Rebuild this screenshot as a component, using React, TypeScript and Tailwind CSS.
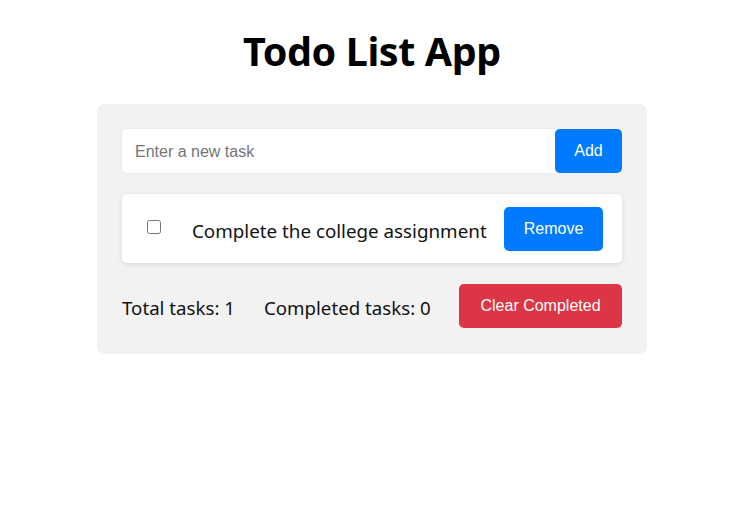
import React from "react";

export default function App() {
  return (
    <div className="min-h-[512px] w-full bg-white flex flex-col items-center pr-[11px]" style={{ fontFamily: "'Noto Sans', 'Open Sans', sans-serif" }}>
      <h1 className="mt-[25px] text-[39.5px] leading-[52px] font-bold text-black tracking-[-0.4px]">Todo List App</h1>
      <div className="mt-[27px] w-[550px] rounded-[8px] bg-[#f2f2f2] px-[25px] pt-[25px] pb-[26px]">
        <div className="flex h-[44px]">
          <input
            className="flex-1 rounded-l-[5px] bg-white px-[13px] pt-[1px] text-[16px] text-[#333] outline-none placeholder:text-[#757575] shadow-[0_0_4px_rgba(0,0,0,0.06)]"
            style={{ fontFamily: "'Liberation Sans', Arial, sans-serif" }}
            placeholder="Enter a new task"
          />
          <button
            className="w-[67px] rounded-[5px] bg-[#007bff] text-[16px] text-white"
            style={{ fontFamily: "'Liberation Sans', Arial, sans-serif" }}
          >
            Add
          </button>
        </div>
        <div className="mt-[21px] flex h-[69px] items-center rounded-[5px] bg-white pl-[25px] pr-[19px] shadow-[0_1px_5px_rgba(0,0,0,0.12)]">
          <input type="checkbox" className="h-[14px] w-[14px] m-0 mt-[-4px]" />
          <span className="ml-[31px] pt-[5px] text-[18.8px] text-[#111]">Complete the college assignment</span>
          <button
            className="ml-auto h-[44px] w-[99px] rounded-[5px] bg-[#007bff] text-[16px] text-white"
            style={{ fontFamily: "'Liberation Sans', Arial, sans-serif" }}
          >
            Remove
          </button>
        </div>
        <div className="mt-[21px] flex h-[44px] items-center">
          <span className="pt-[4px] text-[18.7px] text-[#111]">Total tasks: 1</span>
          <span className="ml-[29px] pt-[4px] text-[18.7px] text-[#111]">Completed tasks: 0</span>
          <button
            className="ml-auto h-[44px] w-[163px] rounded-[5px] bg-[#dc3545] text-[16px] text-white"
            style={{ fontFamily: "'Liberation Sans', Arial, sans-serif" }}
          >
            Clear Completed
          </button>
        </div>
      </div>
    </div>
  );
}
